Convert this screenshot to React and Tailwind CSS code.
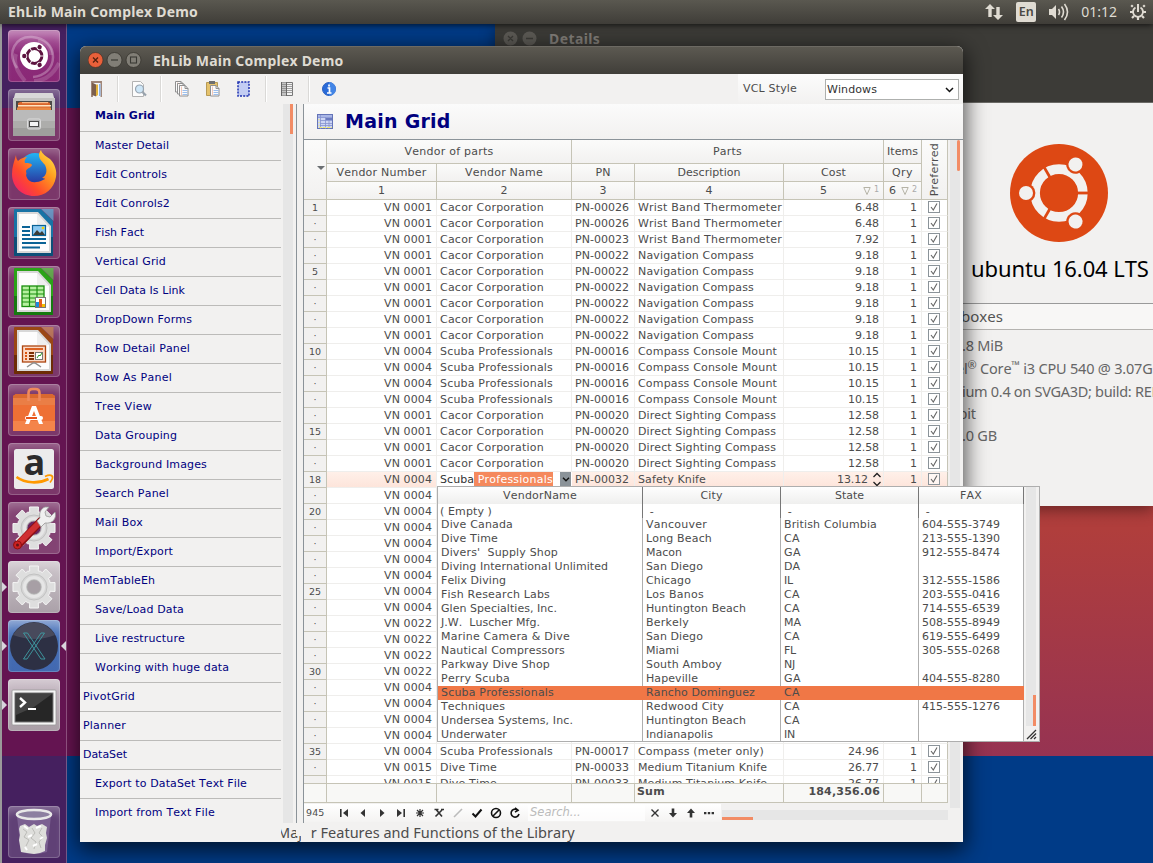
import React from "react";

const V1 = ["VN 0001", "Cacor Corporation"];
const V4 = ["VN 0004", "Scuba Professionals"];
const WBT = "Wrist Band Thermometer";
const NC = "Navigation Compass";
const CCM = "Compass Console Mount";
const DSC = "Direct Sighting Compass";
const rows = [
  [...V1, "PN-00026", WBT, "6.48"],
  [...V1, "PN-00026", WBT, "6.48"],
  [...V1, "PN-00023", WBT, "7.92"],
  ...Array(6).fill([...V1, "PN-00022", NC, "9.18"]),
  ...Array(4).fill([...V4, "PN-00016", CCM, "10.15"]),
  ...Array(4).fill([...V1, "PN-00020", DSC, "12.58"]),
  [...V4, "PN-00032", "Safety Knife", "13.12"],
  ...Array(8).fill(["VN 0004"]),
  ...Array(4).fill(["VN 0022"]),
  ...Array(4).fill(["VN 0004"]),
  [...V4, "PN-00017", "Compass (meter only)", "24.96"],
  ["VN 0015", "Dive Time", "PN-00033", "Medium Titanium Knife", "26.77"],
  ["VN 0015", "Dive Time", "PN-00033", "Medium Titanium Knife", "26.77"],
];

const vendors = [
  ["Dive Canada", "Vancouver", "British Columbia", "604-555-3749"],
  ["Dive Time", "Long Beach", "CA", "213-555-1390"],
  ["Divers'  Supply Shop", "Macon", "GA", "912-555-8474"],
  ["Diving International Unlimited", "San Diego", "DA", ""],
  ["Felix Diving", "Chicago", "IL", "312-555-1586"],
  ["Fish Research Labs", "Los Banos", "CA", "203-555-0416"],
  ["Glen Specialties, Inc.", "Huntington Beach", "CA", "714-555-6539"],
  ["J.W.  Luscher Mfg.", "Berkely", "MA", "508-555-8949"],
  ["Marine Camera & Dive", "San Diego", "CA", "619-555-6499"],
  ["Nautical Compressors", "Miami", "FL", "305-555-0268"],
  ["Parkway Dive Shop", "South Amboy", "NJ", ""],
  ["Perry Scuba", "Hapeville", "GA", "404-555-8280"],
  ["Scuba Professionals", "Rancho Dominguez", "CA", ""],
  ["Techniques", "Redwood City", "CA", "415-555-1276"],
  ["Undersea Systems, Inc.", "Huntington Beach", "CA", ""],
  ["Underwater", "Indianapolis", "IN", ""],
];

const nav = [
  ["Main Grid", 1], ["Master Detail", 1], ["Edit Controls", 1], ["Edit Conrols2", 1],
  ["Fish Fact", 1], ["Vertical Grid", 1], ["Cell Data Is Link", 1], ["DropDown Forms", 1],
  ["Row Detail Panel", 1], ["Row As Panel", 1], ["Tree View", 1], ["Data Grouping", 1],
  ["Background Images", 1], ["Search Panel", 1], ["Mail Box", 1], ["Import/Export", 1],
  ["MemTableEh", 0], ["Save/Load Data", 1], ["Live restructure", 1], ["Working with huge data", 1],
  ["PivotGrid", 0], ["Planner", 0], ["DataSet", 0], ["Export to DataSet Text File", 1],
  ["Import from Text File", 1],
];

/* Spreads a label so that its width is the sum of whole-pixel glyph advances. */
const ctx = document.createElement("canvas").getContext("2d");
function spacing(text, font) {
  ctx.font = font;
  let d = 0;
  for (const ch of text) {
    const w = ctx.measureText(ch).width;
    d += (ch === " " ? 4 : Math.round(w)) - w;
  }
  return text.length ? d / text.length : 0;
}
function T({ children, bold }) {
  const text = String(children ?? "");
  return (
    <span className="whitespace-pre" style={{ letterSpacing: spacing(text, (bold ? "bold " : "") + '11px "DejaVu Sans"') + "px" }}>
      {text}
    </span>
  );
}

/* ---------- launcher ---------- */

function Svg({ children, s = 52, className = "" }) {
  return (
    <svg width={s} height={s} viewBox={`0 0 ${s} ${s}`} className={"block shrink-0 " + className}>
      {children}
    </svg>
  );
}

function CircleOfFriends({ color, bg }) {
  return (
    <g>
      <circle r="23.9" fill="none" stroke={color} strokeWidth="9.6" />
      {[0, 120, 240].map((a) => (
        <g key={a} transform={`rotate(${a})`}>
          <rect x="17" y="-1.4" width="14" height="2.8" fill={bg} />
          <circle cx="-33" r="9.4" fill={bg} />
          <circle cx="-33" r="7" fill={color} />
        </g>
      ))}
    </g>
  );
}

const gearPath = (() => {
  let d = "";
  for (let i = 0; i < 8; i++) {
    const p = (r, deg) => {
      const t = ((i * 45 + deg) * Math.PI) / 180;
      return `${(26 + r * Math.cos(t)).toFixed(2)} ${(26 + r * Math.sin(t)).toFixed(2)}`;
    };
    d += `${i ? "L" : "M"}${p(16.5, -15)}L${p(21.5, -12)}L${p(21.5, 12)}L${p(16.5, 15)}L${p(17, 22)}`;
  }
  return d + "Z";
})();

function Gear({ hole }) {
  return (
    <g>
      <path d={gearPath} fill="#dedede" stroke="#f6f6f6" strokeWidth="1" strokeLinejoin="round" />
      <circle cx="26" cy="26" r="13" fill="#d6d6d6" stroke="#c2c2c2" />
      <circle cx="26" cy="26" r="9.5" fill="none" stroke="#e6e6e6" strokeWidth="3" />
      <circle cx="26" cy="26" r="7" fill={hole} stroke="#aaa" strokeWidth=".8" />
    </g>
  );
}

function Doc({ edge, dark, fold, children }) {
  return (
    <g>
      <path d={"M7 2h26l12 12v34q0 1-1 1H7q-1 0-1-1V3q0-1 1-1z"} fill={edge} />
      <path d="M6 30v18q0 1 1 1h37q1 0 1-1v-18z" fill={dark} />
      <path d="M33.500 2h12v12z" fill={fold} opacity=".75" />
      <path d="M9 5h21l13 14v27H9z" fill="#d8d8d8" />
      <path d="M11 7h18l12 13v24H11z" fill="#fdfdfd" />
      <path d="M29 7l12 13H29z" fill="#eee" />
      {children}
    </g>
  );
}

function FirefoxIcon() {
  return (
    <g>
      <defs>
        <linearGradient id="ffx" x1="0" y1="1" x2="1" y2="0">
          <stop offset="0" stopColor="#f0147c" />
          <stop offset=".35" stopColor="#ff4a2b" />
          <stop offset=".65" stopColor="#ff9a1f" />
          <stop offset="1" stopColor="#fff44f" />
        </linearGradient>
        <linearGradient id="ffb" x1="0" y1="0" x2="0" y2="1">
          <stop offset="0" stopColor="#22b5f5" />
          <stop offset="1" stopColor="#2a2f9a" />
        </linearGradient>
      </defs>
      <circle cx="27" cy="21" r="16" fill="url(#ffb)" />
      <path d="M8 7c0 3 1 5 2 6 3-3 7-4 9-4-2 2-3 4-2 6 2 0 6 0 7 2-1 3-5 3-6 6 0 1 1 3 0 4 1 5 5 8 10 7 4 0 6-2 9-3 0-1-3-1-3-1 4-2 6-7 3-13-2-3-6-5-6-10 0-2 1-4 2-5 1 4 5 6 9 9 5 5 7 12 6 18-2 12-11 19-22 19C14 48 4 39 4 26 4 19 6 14 8 7z" fill="url(#ffx)" />
    </g>
  );
}

function TileSvg({ name }) {
  switch (name) {
    case "dash":
      return (
        <g>
          <path d="M9 38C-2 22 8 6 24 7c13 1 21 9 21 20 0 12-9 19-20 20" fill="none" stroke="#fff" strokeOpacity=".28" strokeWidth="2.500" />
          <path d="M17 51C9 42 5 33 8 24M30 11c9 1 13 7 13 14M26 51c12 0 20-8 25-18" fill="none" stroke="#fff" strokeOpacity=".16" strokeWidth="4" />
          <circle cx="26" cy="26" r="14" fill="#fff" />
          <g transform="translate(26.5 26) scale(.31)"><CircleOfFriends color="#5d1440" bg="#fff" /></g>
        </g>
      );
    case "files":
      return (
        <g>
          <path d="M8 4h36q1 0 1 1l2 7H5l2-7q0-1 1-1z" fill="#d8d8d8" />
          <path d="M5 9h42v12H5z" fill="#c2c2c0" />
          <rect x="8" y="12" width="36" height="9" fill="#4c4a48" />
          <path d="M10 14l2-1h28l2 1v7H10z" fill="#d9662c" /><path d="M10 16h33v1.500H10z" fill="#ffe3c0" />
          <path d="M14 13h26v1.200H14z" fill="#f6b989" /><path d="M9 18.500h34v2.500H9z" fill="#e98a45" />
          <path d="M5 21h42v26H5z" fill="#9f9f9d" /><path d="M5 21h42v11H5z" fill="#bababa" /><path d="M5 32h42v7H5z" fill="#adadab" />
          <rect x="19.500" y="30" width="13" height="10" rx="1.500" fill="#b5b5b5" stroke="#dcdcdc" />
          <rect x="21.500" y="32.500" width="9" height="5" fill="#f4f4f4" stroke="#4a4a4a" />
        </g>
      );
    case "firefox":
      return <FirefoxIcon />;
    case "writer":
      return (
        <Doc edge="#1873a5" dark="#0d4f78" fold="#5da9d6">
          <path d="M14 20h8M14 24h8M14 28h8M14 32h24M14 36h24M14 40.500h18" stroke="#0a6396" strokeWidth="1.8" />
          <rect x="24.500" y="18.500" width="13" height="10" fill="#8bc9f2" stroke="#0a6396" strokeWidth="1.2" />
          <path d="M25 28l4-5 3 3 2-2 3 4z" fill="#3c3c36" /><circle cx="35" cy="21" r="1.3" fill="#f5d000" />
        </Doc>
      );
    case "calc":
      return (
        <Doc edge="#2ba318" dark="#167a10" fold="#55c640">
          <rect x="14" y="20" width="22" height="20.5" fill="#b5f09f" stroke="#198e0d" strokeWidth="1.3" />
          <path d="M14 24h22M14 28h22M14 32h22M14 36h22M21.500 20v20M29 20v20" stroke="#198e0d" strokeWidth="1.2" />
          <rect x="27.500" y="31.500" width="10" height="10" fill="#fff" stroke="#777" />
          <path d="M28 36h3v5h-3z" fill="#1b8be0" /><path d="M31 33h3v8h-3z" fill="#e4601d" /><path d="M34 38h3v3h-3z" fill="#f2bd00" />
        </Doc>
      );
    case "impress":
      return (
        <Doc edge="#9a4715" dark="#6d2c06" fold="#c78452">
          <rect x="14.500" y="21" width="23" height="16" fill="#fbd9c6" stroke="#ad4611" strokeWidth="1.300" />
          <path d="M17 24h18" stroke="#d9540f" strokeWidth="1.800" />
          <path d="M17 28h2M17 31h2M17 34h2" stroke="#d9540f" strokeWidth="1.800" />
          <path d="M21 28h5M21 31h5M21 34h5" stroke="#7b2d03" strokeWidth="1.800" />
          <rect x="27.500" y="27.500" width="7" height="7" fill="#fff" stroke="#777" />
          <path d="M29 33l2-3 1 1 2-3" stroke="#2a9a20" fill="none" />
          <path d="M19 42l6-4h2l6 4" stroke="#8d8d8d" fill="none" strokeWidth="1.500" />
        </Doc>
      );
    case "software":
      return (
        <g>
          <path d="M5 12l3-2h36l3 2v35H5z" fill="#ee7035" />
          <path d="M5 12l3-2h36l3 2v2H5z" fill="#d9682f" />
          <path d="M5 37h42v10H5z" fill="#f4844a" /><path d="M5 14h42v7H5z" fill="#e8854e" opacity=".7" />
          <path d="M20.500 17V9q0-4 4-4h3q4 0 4 4v8" fill="none" stroke="#ee8a5c" strokeWidth="2.600" />
          <path d="M17 40l7-18h4l7 18h-4l-5-13-5 13z" fill="#fff" />
          <rect x="17" y="32" width="18" height="4" rx="2" fill="#fff" /><rect x="18" y="33" width="11" height="2" fill="#e8541c" />
        </g>
      );
    case "amazon":
      return (
        <g>
          <rect x="6" y="6" width="40" height="40" rx="2.500" fill="#ececec" />
          <path d="M8.500 34c9 6.500 22 7 32 2" fill="none" stroke="#f90" strokeWidth="2.600" />
          <path d="M37 33.500c3-1.500 6-1.500 7-.5s0 4-2 6.500" fill="none" stroke="#f90" strokeWidth="1.800" />
        </g>
      );
    case "settings":
      return (
        <g>
          <Gear hole="#6b2560" />
          <path d="M12 41L33 19" stroke="#8e0e12" strokeWidth="8" strokeLinecap="round" />
          <path d="M12 40L33 19" stroke="#cf3032" strokeWidth="6" strokeLinecap="round" />
          <circle cx="9.500" cy="43" r="4" fill="#c22" stroke="#8e0e12" /><circle cx="9.500" cy="43" r="1.500" fill="#641016" />
          <path d="M29 19l3-3c-1-4 0-9 5-11l4 0-4 5 1 4 4 1 5-5c2 6-2 12-10 11l-4 4z" fill="#f0f0f0" stroke="#999" strokeWidth=".8" />
        </g>
      );
    case "gear":
      return <Gear hole="#a79fa5" />;
    case "x":
      return (
        <g>
          <circle cx="26" cy="26" r="24" fill="#2d3044" />
          <path d="M5 15a24 24 0 0 1 42 0q-20 8-42 0z" fill="#fff" opacity=".13" />
          <path d="M15.500 13h4L37 39h-4zM33 13h3.500L19 39h-3.500z" fill="none" stroke="#3f9ea5" strokeWidth=".9" />
        </g>
      );
    case "terminal":
      return (
        <g>
          <rect x="4" y="11" width="44" height="35" rx="1" fill="#f5f5f5" stroke="#999" strokeWidth=".8" />
          <rect x="7" y="14" width="38" height="29" fill="#262626" stroke="#777" />
          <path d="M8 15h36L26 28 8 36z" fill="#fff" opacity=".13" />
          <path d="M12 19l5 4.500-5 4.500" fill="none" stroke="#fff" strokeWidth="2.400" />
          <path d="M20 30h8" stroke="#fff" strokeWidth="2" />
        </g>
      );
    default:
      return (
        <g>
          <path d="M9 10h34l-4 36q-13 4-26 0z" fill="#b9a9cf" opacity=".3" />
          <path d="M12 20l5-2 4 3 5-3 3 2 5-2 5 3-1 6 1 5-2 7 0 6-5 2-6 1-7-1-6-1-1-6-1-6 1-5-1-6z" fill="#dededb" />
          <path d="M15 23l4 3-3 5 5 3-3 6M24 22l3 5-4 5 5 4-2 7M34 22l-3 5 4 4-4 5 2 6" stroke="#bcbcb8" fill="none" />
          <path d="M16 20l4 3M28 22l5-2M20 31l4-2M32 33l3-2M25 40l4-2M17 41l2 3" stroke="#fff" strokeWidth="2" />
          <ellipse cx="26" cy="8.500" rx="17" ry="4.500" fill="#8c7fa0" stroke="#e8e8e8" strokeWidth="2.600" />
        </g>
      );
  }
}

const tiles = [
  ["dash", "bg-[linear-gradient(#b56aa8,#8c2c7a_45%,#8a2876)]"],
  ["files", "bg-white/15"],
  ["firefox", "bg-white/15"],
  ["writer", "bg-white/15"],
  ["calc", "bg-white/15"],
  ["impress", "bg-white/15"],
  ["software", "bg-white/15"],
  ["amazon", "bg-white/15"],
  ["settings", "bg-white/20"],
  ["gear", "bg-[linear-gradient(#cfc7cd,#aaa0a8)]"],
  ["x", "bg-[linear-gradient(#6f8fc8,#4670b8_35%,#4268b0)]"],
  ["terminal", "bg-[linear-gradient(#c9bcc6,#a99ea6)]"],
];

function Tile({ name, bg, left, right }) {
  return (
    <div className={"relative h-[52px] w-[52px] rounded-[4px] shadow-[inset_0_0_0_1px_rgba(255,255,255,.2),inset_0_9px_9px_-4px_rgba(255,255,255,.26)] " + bg}>
      <Svg><TileSvg name={name} /></Svg>
      {name === "amazon" && (
        <span className="absolute left-[15.5px] top-0 font-['Open_Sans',sans-serif] text-[36px] font-bold leading-[38px] text-[#2b2b2b]">a</span>
      )}
      {left && <span className="absolute -left-[6px] top-[21px] border-y-[5px] border-l-[5px] border-y-transparent border-l-[#d8d4dc]" />}
      {right && <span className="absolute left-[53px] top-[21px] border-y-[5px] border-r-[5px] border-y-transparent border-r-[#d8d4dc]" />}
    </div>
  );
}

function Launcher() {
  return (
    <div className="absolute bottom-0 left-0 top-[24px] flex w-[67px] flex-col border-l-2 border-r border-l-[#9a9a9a] border-r-white/25 bg-[linear-gradient(#45205f_0_84px,#641451_84px_732px,#45205f_732px)] pl-[6px]">
      <div className="flex flex-col gap-[7px] pt-[6px]">
        {tiles.map(([n, bg]) => (
          <Tile key={n} name={n} bg={bg} left={n === "gear" || n === "x" || n === "terminal"} right={n === "x"} />
        ))}
      </div>
      <div className="mt-auto pb-[5px]"><Tile name="trash" bg="bg-white/15" /></div>
    </div>
  );
}

/* ---------- top bar ---------- */

function TopBar() {
  return (
    <div className="absolute inset-x-0 top-0 z-10 flex h-[24px] items-center bg-[linear-gradient(#5a5850,#3f3d38)] pl-[8px] pr-[6px] font-['Noto_Sans',sans-serif] text-[#dfdbd2] shadow-[0_1px_6px_rgba(0,0,0,.7)]">
      <span className="text-[14px] font-bold leading-[24px] tracking-[.2px]">EhLib Main Complex Demo</span>
      <div className="ml-auto flex items-center">
        <svg width="18" height="18" viewBox="0 0 18 18" fill="#dfdbd2"><path d="M5 1l5 5H6.700v8H3.300V6H0zM13 17l-5-5h3.300V4h3.400v8H18z" /></svg>
        <div className="ml-[13px] flex h-[20px] w-[20px] items-center justify-center rounded-[2px] bg-[#dfdbd2] text-[12.500px] font-semibold leading-none text-[#4a4843]">En</div>
        <svg className="ml-[12px]" width="21" height="18" viewBox="0 0 21 18"><path d="M1 6h3l4-4v14l-4-4H1z" fill="#dfdbd2" /><path d="M10.500 6q2 3 0 6M13.500 3.500q4 5.500 0 11M16.500 1q6 8 0 16" fill="none" stroke="#dfdbd2" strokeWidth="1.600" /></svg>
        <span className="ml-[12px] text-[14px] leading-[24px]">01:12</span>
        <svg className="ml-[12px]" width="18" height="18" viewBox="0 0 18 18" fill="none" stroke="#dfdbd2">
          <path d="M6.500 4.500a5 5 0 1 0 5 0" strokeWidth="1.900" /><path d="M9 1v8" strokeWidth="2" />
          <path d="M3.800 3.800l-1.600-1.600M14.200 3.800l1.600-1.600M4 9H1M14 9h3M5 13l-2 2M13 13l2 2M9 14v3" strokeWidth="2.200" />
        </svg>
      </div>
    </div>
  );
}

/* ---------- details window ---------- */

function DetailsWindow() {
  return (
    <div className="absolute left-[495px] top-[24px] flex h-[482px] w-[658px] flex-col overflow-hidden bg-[#f2f1f0] font-['Noto_Sans',sans-serif] shadow-[0_4px_14px_rgba(0,0,0,.4)]">
      <div className="h-[79px] shrink-0 border-b border-[#6b6a66] bg-[#3c3b37] pl-[8px]">
        <div className="flex h-[29px] items-center gap-[5px]">
          <svg width="34" height="15" viewBox="0 0 34 15"><circle cx="7.500" cy="7.500" r="7" fill="#5c5a55" /><circle cx="26.500" cy="7.500" r="7" fill="#5c5a55" /><path d="M5 5l5 5M10 5l-5 5M23 7.500h7" stroke="#3c3b37" strokeWidth="1.300" /></svg>
          <span className="pl-[7px] text-[14px] font-bold tracking-[.4px] text-[#807d78]">Details</span>
        </div>
      </div>
      <div className="flex h-[201px] shrink-0 flex-col border-b border-[#9a9a9a] pl-[476px]">
        <svg className="ml-[38px] mt-[40px] shrink-0" width="100" height="100" viewBox="-50 -50 100 100"><circle r="49" fill="#dd4814" /><CircleOfFriends color="#f2f1f0" bg="#dd4814" /></svg>
        <div className="mt-[8px] whitespace-nowrap text-[22px] leading-[34px] tracking-[-0.1px] text-black">ubuntu 16.04 LTS</div>
      </div>
      <div className="flex h-[26px] shrink-0 items-center border-b border-[#b5b3b0] bg-[#f8f7f6] pl-[466px] text-[15px] text-[#555]">boxes</div>
      <div className="flex flex-col whitespace-pre pl-[467px] pt-[4px] text-[14.500px] leading-[22px] tracking-[-0.2px] text-[#666]">
        <div>.8 MiB</div>
        <div className="-ml-[6px] leading-[24px]">el<sup className="text-[11px]">®</sup> Core<sup className="text-[11px]">™</sup> i3 CPU 540 @ 3.07GHz</div>
        <div className="tracking-[-0.3px]">ium 0.4 on SVGA3D; build: RELEASE;</div>
        <div className="-ml-[8px]">-bit</div>
        <div>.0 GB</div>
      </div>
    </div>
  );
}

/* ---------- main window ---------- */

function TitleBar() {
  return (
    <div className="flex h-[28px] shrink-0 items-center rounded-t-[6px] bg-[linear-gradient(#5d5a52,#403e39)] pl-[8px] shadow-[inset_0_1px_0_rgba(255,255,255,.1)]">
      <svg width="54" height="16" viewBox="0 0 54 16">
        <circle cx="7.500" cy="8" r="7.500" fill="#e9603a" stroke="#3c2c24" strokeWidth=".6" />
        <path d="M5 5.500l5 5M10 5.500l-5 5" stroke="#54200f" strokeWidth="1.300" />
        <circle cx="26.500" cy="8" r="7.500" fill="#817e76" stroke="#37352f" strokeWidth=".8" /><path d="M23 8h7" stroke="#3a3934" strokeWidth="1.200" />
        <circle cx="45.500" cy="8" r="7.500" fill="#817e76" stroke="#37352f" strokeWidth=".8" /><rect x="42.500" y="5" width="6" height="6" fill="none" stroke="#3a3934" strokeWidth="1.100" />
      </svg>
      <span className="pl-[11px] font-['Noto_Sans',sans-serif] text-[14px] font-bold tracking-[.22px] text-[#dfdbd2]">EhLib Main Complex Demo</span>
    </div>
  );
}

function Page({ x, y }) {
  return (
    <g transform={`translate(${x} ${y})`}>
      <path d="M.5.500h5.500l3 3v7.500H.5z" fill="#fbfbfb" stroke="#909090" />
      <path d="M6 .500v3h3" fill="none" stroke="#909090" />
      <path d="M3.500 5.500h5M3.500 7.500h5M3.500 9.500h5" stroke="#9dbfec" />
      <path d="M2.500 1.500v9" stroke="#f0b9a4" strokeWidth=".8" />
    </g>
  );
}

function Toolbar() {
  const sep = "h-[26px] w-[2px] border-l border-[#dad9d7] bg-white";
  return (
    <div className="flex h-[30px] shrink-0 items-center pt-0">
      <div className="flex w-[37px] pl-[8px]"><Svg s={16}><path d="M3 0h11v16H3z" fill="#a08779" /><path d="M5 2h7.500v14H5z" fill="#f4f7fc" /><path d="M11 3h1.500v12H11z" fill="#8ab4e8" /><path d="M4 1.500l4 2v12l-4-1.500z" fill="#7c5f4c" /><path d="M8 3.500h2V14l-2 1.500z" fill="#e3b23a" /></Svg></div>
      <div className={sep} />
      <div className="flex w-[41px] pl-[12px]"><Svg s={16}><path d="M1.500.500h8l3 3v12h-11z" fill="#fcfcfc" stroke="#b2b2b2" /><circle cx="8.500" cy="8" r="4" fill="#cde6f7" stroke="#98a4b0" strokeWidth="1.200" /><path d="M11.500 11l3.500 3.500" stroke="#98a2ac" strokeWidth="2.200" /></Svg></div>
      <div className={sep} />
      <div className="flex w-[103px] gap-[15px] pl-[12px]">
        <Svg s={16}><Page x={1} y={0} /><Page x={3} y={2} /><Page x={5} y={4} /></Svg>
        <Svg s={16}><path d="M1.500 1.500h11v13h-11z" fill="#e5c26c" stroke="#b79a55" /><path d="M4 0h6v3H4z" fill="#6e6e6e" /><Page x={5} y={4} /></Svg>
        <Svg s={16}><rect x="2" y="1" width="11" height="14" fill="#c3cdf3" stroke="#1c2fb0" strokeWidth="1.500" strokeDasharray="2 1.200" /></Svg>
      </div>
      <div className={sep} />
      <div className="flex w-[41px] pl-[12px]"><Svg s={16}><path d="M2.500 1.500h11v13h-11z" fill="#f2f2f2" stroke="#777" /><path d="M2.500 1.500h5v13h-5z" fill="#c4c4c4" /><path d="M2.500 3.500h11M2.500 5.500h11M2.500 7.500h11M2.500 9.500h11M2.500 11.500h11" stroke="#888" strokeWidth=".8" /><path d="M7.500 1v14M2.500 1v14" stroke="#666" /></Svg></div>
      <div className={sep} />
      <div className="flex flex-1 pl-[12px]"><Svg s={14}><circle cx="7" cy="7" r="6.500" fill="#2a6bd8" stroke="#2a5fc0" /><path d="M7 0a7 7 0 0 1 0 14z" fill="#4d90ec" opacity=".7" /><path d="M7 2.500v2M5.500 6h2v5M5 11h4.500" stroke="#fff" strokeWidth="1.700" fill="none" /></Svg></div>
      <div className="flex h-[30px] w-[225px] items-start bg-[linear-gradient(#fcfcfc,#f2f1f0)] pl-[5px]">
        <span className="w-[82px] pt-[7px] leading-[16px]"><T>VCL Style</T></span>
        <div className="mt-[5px] flex h-[21px] w-[134px] items-center justify-between border border-[#aeb0ae] bg-white pl-[1px] pr-[4px] text-[#333]">
          <span className="pt-px"><T>Windows</T></span>
          <svg width="9" height="6" viewBox="0 0 9 6"><path d="M1 1l3.500 3.500L8 1" fill="none" stroke="#111" strokeWidth="1.500" /></svg>
        </div>
      </div>
    </div>
  );
}

function Sidebar() {
  return (
    <div className="flex w-[217px] shrink-0 border-r border-[#8b9399] pr-[3px]">
      <div className="flex w-[201px] flex-col overflow-hidden text-[#00007f]">
        {nav.map(([t, ind], i) => (
          <div key={t} className={"flex shrink-0 items-center border-b border-[#bcbbb9] " + (i ? "h-[29px] pt-px " : "h-[28px] pb-[2px] font-bold ") + (ind ? "pl-[15px]" : "pl-[3px]")}>
            <T bold={!i}>{t}</T>
          </div>
        ))}
      </div>
      <div className="ml-[2px] w-[10px] bg-[#e6e6e6]"><div className="ml-auto h-[30px] w-[3px] bg-[#f28c65]" /></div>
    </div>
  );
}

const cols = "grid grid-cols-[23px_110px_135px_63px_149px_100px_38px_26px] w-[644px]";

function GridHeader() {
  const b = "flex justify-center border-b border-r border-[#c6c4b6] bg-[linear-gradient(#fbfbfa,#f2f1f0)] ";
  const c = b + "items-center pt-px";
  return (
    <div className={cols + " shrink-0 grid-rows-[24px_18px_18px]"}>
      <div className={b + "row-span-3 items-end !justify-end pb-[29px] pr-px"}><span className="border-x-[4px] border-t-[4px] border-x-transparent border-t-[#6b6f72]" /></div>
      <div className={c + " col-span-2"}><T>Vendor of parts</T></div>
      <div className={c + " col-span-3"}><T>Parts</T></div>
      <div className={c}><T>Items</T></div>
      <div className={b + "row-span-3 items-center"}><span className="rotate-180 leading-[14px] [writing-mode:vertical-rl]"><T>Preferred</T></span></div>
      {["Vendor Number", "Vendor Name", "PN", "Description", "Cost", "Qry", "1", "2", "3", "4"].map((t) => <div key={t} className={c}><T>{t}</T></div>)}
      <div className={c + " !justify-end pr-[4px]"}><span className="mr-[36px]">5</span><SortMark n="1" /></div>
      <div className={c + " !justify-end pr-[4px]"}><span className="mr-[5px]">6</span><SortMark n="2" /></div>
    </div>
  );
}

function SortMark({ n }) {
  return (
    <span className="flex items-center gap-[3px] text-[8px] leading-none text-[#aaa]">
      <svg width="8" height="8" viewBox="0 0 8 8"><path d="M.8.500h6.400L4 7.500z" fill="none" stroke="#b5b3a6" /></svg><span className="-mt-[2px]">{n}</span>
    </span>
  );
}

function Check() {
  return (
    <svg width="12" height="12" viewBox="0 0 12 12"><rect x=".5" y=".5" width="11" height="11" fill="#fff" fillOpacity=".6" stroke="#8b9399" /><path d="M3 6l2.300 3L9 2.500" fill="none" stroke="#666" strokeWidth="1.100" /></svg>
  );
}

function VendorEditor() {
  return (
    <div className="flex h-[16px] bg-white pr-px">
      <span className="pl-[3px] text-[#333]"><T>Scuba</T></span>
      <span className="h-[15px] whitespace-pre bg-[#f5895d] text-white"><T>{" Professionals"}</T></span>
      <span className="ml-auto flex h-[14px] w-[11px] items-center justify-center bg-[#8b9399]">
        <svg width="8" height="5" viewBox="0 0 8 5"><path d="M1 .8L4 3.800 7 .8" fill="none" stroke="#111" strokeWidth="1.400" /></svg>
      </span>
    </div>
  );
}

function DataRow({ r, i }) {
  const n = i + 1;
  const sel = n === 18;
  const c = "overflow-hidden whitespace-pre border-b border-r border-[#efeeec] px-[3px] ";
  return (
    <div className={cols + " h-[16px] shrink-0 leading-[15px] " + (sel ? "bg-[linear-gradient(#fff0e9,#fde4da)]" : "bg-white")}>
      <div className="border-b border-r border-[#c6c4b6] bg-[#f2f1f0] text-center text-[9.500px]">{n === 1 || n === 18 || n % 5 === 0 ? n : "·"}</div>
      <div className={c + "pr-[4px] text-right"}><T>{r[0]}</T></div>
      {sel ? <VendorEditor /> : <div className={c}><T>{r[1]}</T></div>}
      <div className={c}><T>{r[2]}</T></div>
      <div className={c}><T>{r[3]}</T></div>
      {sel ? (
        <div className={c + "flex justify-end gap-[4px] !pr-px"}><T>{r[4]}</T>
          <svg width="10" height="15" viewBox="0 0 10 15"><path d="M1.500 5L5 1.500 8.500 5M1.500 10L5 13.500 8.500 10" fill="none" stroke="#222" strokeWidth="1.300" /></svg>
        </div>
      ) : <div className={c + "pr-[4px] text-right"}><T>{r[4]}</T></div>}
      <div className={c + "pr-[4px] text-right"}>{r[1] ? 1 : ""}</div>
      <div className="flex items-start justify-center border-b border-r border-b-[#efeeec] border-r-[#c6c4b6] pr-px pt-px">{r[1] && <Check />}</div>
    </div>
  );
}

function NavBar() {
  const k = { fill: "none", stroke: "#333", strokeWidth: 1.6 };
  const icons = [
    <g fill="#333"><path d="M2 2h1.600v8H2zM10 2v8L5 6z" /></g>,
    <path d="M8 2v8L3.500 6z" fill="#333" />,
    <path d="M4 2v8l4.500-4z" fill="#333" />,
    <g fill="#333"><path d="M8.400 2H10v8H8.400zM2 2v8l5-4z" /></g>,
    <path d="M6 2v8M2 6h8M3 3l6 6M9 3L3 9" {...k} strokeWidth="1.200" />,
    <path d="M3.500 3l5.500 6.500M9 3L2.500 9.500M1.500 2.500h4M8 2.500h3" {...k} />,
    <path d="M2 10L10 2" stroke="#bbb" strokeWidth="1.600" />,
    <path d="M1.500 6.500L4.500 9.500 10.500 2.500" {...k} strokeWidth="2" stroke="#111" />,
    <g {...k} stroke="#111"><circle cx="6" cy="6" r="4.500" /><path d="M3 9l6-6" /></g>,
    <path d="M9.500 4A4 4 0 1 0 10 7M6 .8l3 2.400-3 2" {...k} stroke="#111" />,
  ];
  const icons2 = [
    <path d="M2.500 2.500l7 7M9.500 2.500l-7 7" {...k} strokeWidth="1.400" />,
    <path d="M4.700 1.500h2.600V6H10l-4 4.500L2 6h2.700z" fill="#333" />,
    <path d="M4.700 10.500h2.600V6H10L6 1.500 2 6h2.700z" fill="#333" />,
    <path d="M1 5h2.400v2.200H1zM4.800 5h2.400v2.200H4.800zM8.600 5H11v2.200H8.600z" fill="#333" />,
  ];
  return (
    <div className="flex h-[18px] w-[417px] items-center bg-[linear-gradient(#fff,#f4f3f2)]">
      <span className="w-[30px] pl-[2px] text-[9.500px] tracking-[.1px]">945</span>
      {icons.map((g, i) => <span key={i} className="flex w-[19px] justify-center"><Svg s={12}>{g}</Svg></span>)}
      <span className="ml-[4px] mr-px h-[16px] w-[117px] bg-white/70 pl-[2px] text-[11.500px] italic leading-[14px] text-[#bbb]">Search...</span>
      {icons2.map((g, i) => <span key={i} className="flex w-[18px] justify-center"><Svg s={12}>{g}</Svg></span>)}
    </div>
  );
}

function GridPanel() {
  const f = "border-b border-r border-[#c6c4b6] bg-[#f8f8f6] px-[3px] leading-[15px] font-bold";
  return (
    <div className="ml-[6px] flex flex-1 flex-col border-l border-[#8b9399]">
      <div className="flex h-[36px] shrink-0 items-center gap-[12px] border-b border-[#8b9399] bg-[linear-gradient(#fbfbfb,#f2f1f0)] pl-[13px]">
        <Svg s={16}><rect x=".5" y=".5" width="15" height="14" fill="#cdd6f5" stroke="#6474b8" /><path d="M1 1h14v2.500H1z" fill="#a9b6e6" /><path d="M8.500 4h6.500v2H8.500z" fill="#6a7ac0" /><path d="M1 3.500h14M3 6.500h12M3 9.500h12M3 11.500h12M3.500 1v14M8.500 3v12M12 6v9" stroke="#8593cf" strokeWidth=".8" /><path d="M2 13.500h13" stroke="#efe96e" strokeWidth="1.200" strokeDasharray="3 1" /><path d="M2 5v9" stroke="#efe96e" strokeDasharray="1 2" /></Svg>
        <span className="text-[19px] font-bold tracking-[.25px] text-[#00007f]">Main Grid</span>
      </div>
      <div className="flex h-[682px] shrink-0">
        <div className="flex w-[644px] flex-col">
          <GridHeader />
          <div className="flex h-[583px] shrink-0 flex-col overflow-hidden">
            {rows.map((r, i) => <DataRow key={i} r={r} i={i} />)}
          </div>
          <div className={cols + " h-[20px] shrink-0 border-t border-[#c6c4b6] tracking-[.2px]"}>
            <div className={f} /><div className={f} /><div className={f} /><div className={f} />
            <div className={f + " !pl-[2px]"}>Sum</div><div className={f + " text-right"}>184,356.06</div><div className={f} /><div className={f} />
          </div>
          <div className="flex h-[19px] shrink-0 items-end">
            <NavBar />
            <div className="mb-[2px] ml-px flex h-[10px] flex-1 items-end bg-[#e6e6e6]"><div className="h-[3px] w-[31px] bg-[#f28c65]" /></div>
          </div>
        </div>
        <div className="ml-[2px] h-[668px] w-[10px] bg-[#e6e6e6]"><div className="ml-auto h-[31px] w-[3px] rounded-sm bg-[#f28c65]" /></div>
      </div>
    </div>
  );
}

function MainWindow() {
  return (
    <div className="absolute left-[80px] top-[46px] flex h-[796px] w-[883px] flex-col rounded-t-[6px] bg-[#f2f1f0] shadow-[0_6px_22px_2px_rgba(0,0,0,.7)]">
      <TitleBar />
      <Toolbar />
      <div className="flex h-[719px] shrink-0 overflow-hidden">
        <Sidebar />
        <GridPanel />
      </div>
      <div className="relative ml-[201px] h-[19px] overflow-hidden font-['Noto_Sans',sans-serif] text-[14.500px] leading-[19px]">
        <div className="-ml-[4px] whitespace-nowrap">Major Features and Functions of the Library</div>
        <div className="absolute left-[15px] top-0 h-[13px] w-[15px] bg-[#f2f1f0]" />
        <div className="absolute left-[20px] top-0 h-full w-[10px] bg-[#f2f1f0]" />
      </div>
    </div>
  );
}

/* ---------- vendor lookup popup ---------- */

function LookupPopup() {
  const g = "grid grid-cols-[205px_138px_138px_105px] ";
  return (
    <div className="absolute left-[437px] top-[486px] flex h-[256px] w-[603px] border border-[#aeaeae] bg-white leading-[14px]">
      <div className="w-[586px]">
        <div className={g + "h-[17px] bg-[linear-gradient(#fefefe,#efefee)] text-center leading-[17px]"}>
          {["VendorName", "City", "State", "FAX"].map((t) => <div key={t} className="border-r border-[#777]"><T>{t}</T></div>)}
        </div>
        <div className={g + "h-[14px] leading-[15px]"}>
          {["( Empty )", " -", " -", " -"].map((t, i) => <div key={i} className={"border-r " + (i === 3 ? "border-[#aeaeae] " : "border-[#777] ") + (i ? "pl-[3px]" : "pl-[2px]")}><T>{t}</T></div>)}
        </div>
        {vendors.map((v, i) => (
          <div key={i} className={g + "h-[14px] " + (i === 12 ? "bg-[#f07746]" : "")}>
            {v.map((t, j) => <div key={j} className={"border-r pl-[3px] " + (i === 12 ? "border-transparent" : "border-[#aeaeae]")}><T>{t}</T></div>)}
          </div>
        ))}
      </div>
      <div className="flex flex-1 flex-col bg-[#f2f1f0] pl-[2px]">
        <div className="flex h-[239px] w-[10px] items-end justify-end bg-[#e6e6e6]"><div className="h-[31px] w-[3px] bg-[#f28c65]" /></div>
        <svg className="mt-[3px]" width="12" height="11" viewBox="0 0 12 11"><path d="M1 10L10 1M4.500 10L10 4.500M8 10l2-2" stroke="#333" strokeWidth="1.300" /></svg>
      </div>
    </div>
  );
}

export default function App() {
  return (
    <div className="relative h-[863px] w-[1153px] overflow-hidden bg-[#003b87] font-['DejaVu_Sans',sans-serif] text-[11px] text-[#4c4c4c] [font-kerning:none]">
      <div className="absolute left-0 top-[108px] h-[648px] w-full bg-[linear-gradient(90deg,#6a1453_0,#6a1453_15%,transparent_60%),linear-gradient(#a83a3a,#b03e3c_65%,#963352)]" />
      <DetailsWindow />
      <MainWindow />
      <LookupPopup />
      <TopBar />
      <Launcher />
    </div>
  );
}
